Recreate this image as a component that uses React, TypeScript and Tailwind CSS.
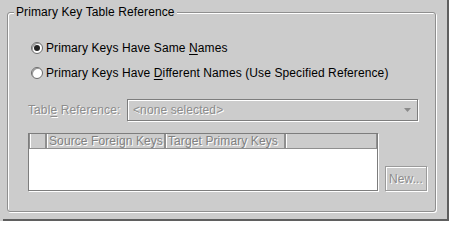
import React from 'react';

const Radio: React.FC<{ checked?: boolean }> = ({ checked }) => (
  <span className="relative w-[12px] h-[12px] rounded-full border border-[#6b6b6b] bg-white shadow-[inset_1px_1px_0_#9a9a9a] flex items-center justify-center shrink-0">
    {checked && <span className="w-[6px] h-[6px] rounded-full bg-[#222]" />}
  </span>
);

const HeaderCell: React.FC<{ w: string; label?: string; grow?: boolean }> = ({ w, label, grow }) => (
  <div
    className={`${w} ${grow ? 'flex-1' : ''} h-full border-l border-r border-[#8f8f8f] shadow-[inset_1px_0_0_#ffffff] pl-[2px] flex items-center text-[#808080] [text-shadow:1px_1px_0_#ffffff] whitespace-nowrap overflow-hidden`}
  >
    {label}
  </div>
);

export default function App() {
  return (
    <div className="w-[449px] h-[221px] bg-[#cccccc] pl-[3px] font-['Liberation_Sans',Arial,sans-serif] text-[12px] leading-[14px] tracking-[0.1px] text-black">
      <div className="w-[446px] h-[221px] border-r-2 border-b-2 border-[#5f5f5f] pl-[4px] pt-[12px]">
        {/* Titled border */}
        <div className="relative w-[429px] h-[200px] border border-[#8f8f8f] rounded-[3px] shadow-[inset_1px_1px_0_#ffffff,1px_1px_0_#ffffff]">
          <span className="absolute left-[6px] -top-[8px] px-[2px] bg-[#cccccc]">Primary Key Table Reference</span>

          <div className="pt-[25px] pl-[20px] flex flex-col">
            <div className="h-[20px] flex items-center gap-[3px] pl-[3px]">
              <Radio checked />
              <span>
                Primary Keys Have Same <span className="underline underline-offset-[2px]">N</span>ames
              </span>
            </div>
            <div className="h-[20px] mt-[5px] flex items-center gap-[3px] pl-[3px]">
              <Radio />
              <span>
                Primary Keys Have <span className="underline underline-offset-[2px]">D</span>ifferent Names (Use Specified Reference)
              </span>
            </div>

            {/* Table reference combo */}
            <div className="mt-[16px] h-[22px] flex items-center">
              <span className="w-[99px] text-[#8c8c8c] [text-shadow:1px_1px_0_#ffffff]">
                Tabl<span className="underline underline-offset-[2px]">e</span> Reference:
              </span>
              <div className="w-[291px] h-[22px] border border-[#7d7d7d] shadow-[inset_1px_1px_0_#ffffff,1px_1px_0_#ffffff] flex items-center pl-[5px] pr-[6px]">
                <span className="flex-1 text-[#8c8c8c] [text-shadow:1px_1px_0_#ffffff]">&lt;none selected&gt;</span>
                <svg width="7" height="4" viewBox="0 0 7 4">
                  <path d="M0 0h7L3.5 4z" fill="#8a8a8a" />
                </svg>
              </div>
            </div>

            {/* Table + New button */}
            <div className="mt-[12px] flex items-end gap-[7px]">
              <div className="w-[350px] h-[58px] border border-[#7d7d7d] shadow-[1px_1px_0_#ffffff] flex flex-col">
                <div className="h-[15px] flex bg-[#cccccc] border-b border-[#8f8f8f]">
                  <HeaderCell w="w-[17px]" />
                  <HeaderCell w="w-[119px]" label="Source Foreign Keys" />
                  <HeaderCell w="w-[120px]" label="Target Primary Keys" />
                  <HeaderCell w="w-auto" grow />
                </div>
                <div className="flex-1 bg-white" />
              </div>
              <div className="w-[42px] h-[25px] border border-[#9a9a9a] shadow-[inset_1px_1px_0_#ffffff,1px_1px_0_#ffffff] flex items-center justify-center text-[#8c8c8c] [text-shadow:1px_1px_0_#ffffff]">
                New...
              </div>
            </div>
          </div>
        </div>
      </div>
    </div>
  );
}
